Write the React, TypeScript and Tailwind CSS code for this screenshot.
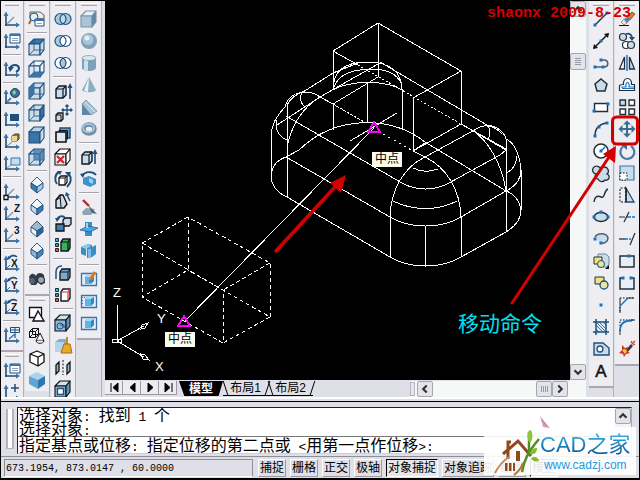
import type { ReactNode } from "react";

const NAVY = "#1f4f7d";
const BLUE = "#3b74a8";
const PALE = "#c9dcea";

type Tool = { name: string; icon: ReactNode } | "sep";

const Svg = ({ children }: { children: ReactNode }) => (
  <svg viewBox="0 0 20 20" className="h-5 w-5 shrink-0" fill="none" aria-hidden="true">
    {children}
  </svg>
);

/* ---------- UCS icons ---------- */

const Ucs = ({ children }: { children?: ReactNode }) => (
  <Svg>
    <path d="M4 5v12M3 16h13" stroke={NAVY} strokeWidth="1.6" />
    <path d="M4 2.5L1.5 7h5zM18 16l-4-2.5v5z" fill={BLUE} />
    {children}
  </Svg>
);

const AxisLetter = ({ letter }: { letter: string }) => (
  <Ucs>
    <path d="M5 15l3-3" stroke={BLUE} />
    <path d="M7 5c2-3 6-3 8-1" stroke={NAVY} strokeWidth="1.6" />
    <path d="M5 7l1-4 3 2z" fill={NAVY} />
    <text x="9" y="14" fontSize="10" fontWeight="bold" fontFamily="Liberation Sans, sans-serif" fill="#111827">
      {letter}
    </text>
  </Ucs>
);

const AxisNumber = ({ letter }: { letter: string }) => (
  <Ucs>
    <path d="M5 15l6-6" stroke="#8a97a5" strokeWidth="1.4" />
    <text x="12" y="9" fontSize="10" fontWeight="bold" fontFamily="Liberation Sans, sans-serif" fill="#111827">
      {letter}
    </text>
  </Ucs>
);

/* ---------- cubes ---------- */

const Cube = ({
  top = PALE,
  front = PALE,
  side = PALE,
  stroke = NAVY,
  wire = false,
  children,
}: {
  top?: string;
  front?: string;
  side?: string;
  stroke?: string;
  wire?: boolean;
  children?: ReactNode;
}) => (
  <Svg>
    <g stroke={stroke} strokeWidth="1.1" strokeLinejoin="round">
      <path d="M2 7l5-5h10l-4 5z" fill={top} />
      <path d="M2 7h11v11H2z" fill={front} />
      <path d="M13 7l4-5v11l-4 5z" fill={side} />
      {wire && <path d="M7 2v11M7 13h10M7 13l-5 5" strokeWidth=".8" />}
    </g>
    {children}
  </Svg>
);

const IsoCube = ({ left = PALE, right = PALE, top = "#f3f8fb" }: { left?: string; right?: string; top?: string }) => (
  <Svg>
    <g stroke={NAVY} strokeWidth=".9" strokeLinejoin="round">
      <path d="M10 2l6 6-6 4-6-4z" fill={top} />
      <path d="M4 8l6 4v6l-6-5z" fill={left} />
      <path d="M16 8l-6 4v6l6-5z" fill={right} />
    </g>
  </Svg>
);

const Rings = ({ a, b, mid }: { a: string; b: string; mid: string }) => (
  <Svg>
    <circle cx="7.5" cy="10" r="5.5" fill={a} />
    <circle cx="12.5" cy="10" r="5.5" fill={b} />
    <path d="M10 5a5.500 5.500 0 0 1 0 10a5.500 5.500 0 0 1 0-10z" fill={mid} />
    <circle cx="7.5" cy="10" r="5.5" stroke={NAVY} strokeWidth="1.2" />
    <circle cx="12.5" cy="10" r="5.5" stroke={NAVY} strokeWidth="1.2" />
  </Svg>
);

const FaceEdit = ({ fill = PALE, children }: { fill?: string; children?: ReactNode }) => (
  <Svg>
    <path d="M3 8l3-3h7v9l-3 3H3z" fill={fill} stroke="#0c1622" strokeWidth="1.4" strokeLinejoin="round" />
    <path d="M3 8h7v9M10 8l3-3" stroke="#0c1622" strokeWidth="1.2" />
    {children}
  </Svg>
);

const Swatches = ({ body, edge }: { body: string; edge: string }) => (
  <Svg>
    <g stroke="#111827" strokeWidth=".9">
      <path d="M2.500 3.500h3v3h-3z" fill="#2fb9e8" />
      <path d="M2.500 8.500h3v3h-3z" fill="#2fae55" />
      <path d="M2.500 13.500h3v3h-3z" fill="#e2544b" />
    </g>
    <path d="M8 7l2-3h7v9l-2 3H8z" fill={body} stroke="#111827" strokeWidth="1.4" />
    <path d="M8 7h7v9M15 7l2-3" stroke={edge} strokeWidth="1.2" />
  </Svg>
);

const Frame = ({ children }: { children?: ReactNode }) => (
  <Svg>
    <path d="M2.500 4.500h15v12h-15z" fill="#e4eef6" stroke={BLUE} strokeWidth="1.3" />
    <path d="M6 8l2-2h7v6l-3 3H6z" fill="#2f86c4" />
    <path d="M6 8h6v7H6z" fill="#5fb4e8" />
    <path d="M6 8l2-2h7l-3 2z" fill="#a9dcf7" />
    {children}
  </Svg>
);

const ucsTools: Tool[] = [
  { name: "UCS", icon: <Ucs><path d="M5 15l7-7" stroke="#8a97a5" strokeWidth="1.5" /></Ucs> },
  { name: "Named UCS", icon: <Ucs><path d="M8 3h10v9H8z" fill="#fff" stroke={NAVY} /><path d="M8 3h10v2H8z" fill={BLUE} /><path d="M10 7.500h6M10 9.500h6" stroke="#90a4b8" /></Ucs> },
  "sep",
  { name: "UCS previous", icon: <Ucs><path d="M8 9c2-4 8-4 9 0c0 2-1 3-3 4" stroke={NAVY} strokeWidth="2" /><path d="M6 8l6 0-4 5z" fill={NAVY} /></Ucs> },
  "sep",
  { name: "World UCS", icon: <Ucs><circle cx="13" cy="6" r="4.500" fill="#3f6f96" stroke="#26425c" /><path d="M10 5l3-2 1 3-2 2z" fill="#7ed5b2" /><path d="M5 15l4-4" stroke="#5f7f9b" strokeWidth="2" /></Ucs> },
  { name: "Object UCS", icon: <Ucs><path d="M8 5h9v7H8z" fill={NAVY} /></Ucs> },
  { name: "Face UCS", icon: <Ucs><path d="M10 5l3-2h4v5l-2 2h-5z" fill="#8f7a2d" stroke="#4d4420" /><path d="M10 5h5v5h-5z" fill="#e8d895" /><path d="M5 15l5-4" stroke="#5f7f9b" /></Ucs> },
  { name: "View UCS", icon: <Ucs><path d="M9 5h9v7H9z" fill={PALE} stroke={BLUE} /><path d="M5 15l4-3" stroke="#8a97a5" /></Ucs> },
  "sep",
  { name: "Origin UCS", icon: <Ucs><path d="M5 15l7-7" stroke="#8a97a5" strokeWidth="1.5" /><path d="M2 14.500h4v4H2z" fill="#fff" stroke="#111" strokeWidth="1.3" /></Ucs> },
  { name: "Z axis vector", icon: <AxisNumber letter="Z" /> },
  { name: "3 point UCS", icon: <AxisNumber letter="3" /> },
  "sep",
  { name: "Rotate X", icon: <AxisLetter letter="X" /> },
  { name: "Rotate Y", icon: <AxisLetter letter="Y" /> },
  { name: "Rotate Z", icon: <AxisLetter letter="Z" /> },
  "sep",
  { name: "Apply UCS", icon: <Ucs><path d="M8.500 2.500h9v5h-9zM13 3v4M8.500 5h9" fill="#eef4f9" stroke={NAVY} /><path d="M7 14l6-5v4" stroke={BLUE} strokeWidth="1.5" /></Ucs> },
];

const ucsTools2: Tool[] = [
  { name: "Display UCS dialog", icon: <Ucs><path d="M8 4h10v9H8z" fill="#fff" stroke={NAVY} /><path d="M8 4h10v2H8z" fill={BLUE} /><path d="M10 8.500h6M10 10.500h6" stroke="#90a4b8" /></Ucs> },
  { name: "Move UCS", icon: <Ucs><path d="M13 2v8M9 6h8" stroke={NAVY} strokeWidth="1.500" /></Ucs> },
];

const viewTools: Tool[] = [
  { name: "Named views", icon: <Svg><path d="M3 3h10l4 3v4H3z" fill="#f5efd8" stroke="#50616f" /><circle cx="7" cy="8" r="4" fill="#dff0fb" stroke={NAVY} /><path d="M4 11l-2 4" stroke="#a06a24" strokeWidth="2" /><path d="M8 10h9v7H8z" fill="#fff" stroke={NAVY} /><path d="M8 10h9v2H8z" fill={BLUE} /><path d="M10 14.500h5" stroke="#90a4b8" /></Svg> },
  "sep",
  { name: "Top view", icon: <Cube top={BLUE} wire /> },
  { name: "Bottom view", icon: <Cube top="#f1f6fa" front="#dfeaf3" side="#eef4f9" wire><path d="M2 18l5-5h10l-4 5z" fill={BLUE} /></Cube> },
  { name: "Left view", icon: <Cube wire><path d="M2 7l5-5v11l-5 5z" fill={BLUE} /></Cube> },
  { name: "Right view", icon: <Cube side={BLUE} wire /> },
  { name: "Front view", icon: <Cube front={BLUE} top="#b9d3e6" /> },
  { name: "Back view", icon: <Cube wire><path d="M7 2h10v11H7z" fill={BLUE} opacity=".75" /></Cube> },
  "sep",
  { name: "SW isometric", icon: <IsoCube left="#3b7db1" right="#a9c9e0" /> },
  { name: "SE isometric", icon: <IsoCube right="#3b7db1" /> },
  { name: "NE isometric", icon: <IsoCube top="#9fb9cd" right="#2f678f" left="#eef4f8" /> },
  { name: "NW isometric", icon: <IsoCube top="#eef4f8" left="#8fb5d1" right="#4f83ab" /> },
  "sep",
  { name: "Camera", icon: <Svg><path d="M2 8c2-4 5-4 7-1l1-2c3-2 5-1 7 1l1 8-4 2-3-3-2 3H4z" fill="#2f3c47" /><circle cx="5" cy="12" r="3" fill="#57646f" /><circle cx="14" cy="11" r="3.500" fill="#9aa8b3" stroke="#1d2730" /></Svg> },
];

const shadeTools: Tool[] = [
  { name: "2D wireframe", icon: <Svg><path d="M2.500 3.500h12v10h-12z" fill="#fff" stroke="#111" strokeWidth="1.3" /><path d="M11 7l6 10H6z" fill="#fff" stroke="#111" strokeWidth="1.4" /></Svg> },
  { name: "3D wireframe", icon: <Svg><path d="M2.500 5.500h6v6h-6zM5.500 2.500h6v6h-6zM2.500 5.500l3-3M8.500 5.500l3-3M2.500 11.500l3-3M8.500 11.500l3-3" stroke="#111" /><path d="M13 7l4 8c-1 3-7 3-8 0z" fill="#fff" stroke="#111" /><path d="M9 15c2-1 6-1 8 0" stroke="#111" strokeWidth=".7" /></Svg> },
  { name: "Hidden", icon: <Svg><path d="M10 3l7 3v8l-6 4-8-4V6z" fill="#fff" stroke="#111" strokeWidth="1.300" strokeLinejoin="round" /><path d="M3 6l8 3 6-3M11 9v9" stroke="#111" strokeWidth="1.300" /></Svg> },
  { name: "Flat shaded", icon: <Svg><path d="M10 2l8 4-7 4-9-4z" fill="#a7d4ef" /><path d="M2 6l9 4v9l-9-5z" fill="#5fa6d5" /><path d="M18 6l-7 4v9l7-5z" fill="#2f77ad" /></Svg> },
];

const solidEditTools: Tool[] = [
  { name: "Union", icon: <Rings a="#a9c8de" b="#a9c8de" mid="#c3d9e8" /> },
  { name: "Subtract", icon: <Rings a="#a9c8de" b="#fff" mid="#fff" /> },
  { name: "Intersect", icon: <Rings a="#fff" b="#fff" mid="#a9c8de" /> },
  "sep",
  { name: "Extrude faces", icon: <FaceEdit><path d="M17 6v12" stroke={NAVY} strokeWidth="1.6" /><path d="M17 2l-2.500 5h5z" fill={NAVY} /></FaceEdit> },
  { name: "Move faces", icon: <Svg><path d="M3 12l2-2h5v6l-2 2H3z" fill={PALE} stroke="#111" strokeWidth="1.300" /><path d="M3 12h5v6" stroke="#111" /><path d="M14 2v10M9 7h10M12.500 3.500L14 2l1.500 1.500M12.500 10.500L14 12l1.500-1.500M10.500 5.500L9 7l1.500 1.500M17.500 5.500L19 7l-1.500 1.500" stroke={NAVY} strokeWidth="1.300" /></Svg> },
  { name: "Offset faces", icon: <Svg><path d="M7 3h10v10H7z" fill="#6da0c9" stroke={NAVY} strokeWidth="1.500" /><path d="M3 7h10v10H3z" fill="#dfe9f1" stroke="#111" strokeWidth="1.600" /><path d="M5.500 5.500h9v9" stroke="#111" /></Svg> },
  { name: "Delete faces", icon: <Cube stroke="#111" top="#fff" front="#edf3f7" side="#fff"><path d="M4 9l7 7M11 9l-7 7" stroke="#cf2431" strokeWidth="2.200" /></Cube> },
  { name: "Rotate faces", icon: <Svg><path d="M6 9l2-2h6v6l-2 3H6z" fill="#fff" stroke="#111" strokeWidth="1.300" /><path d="M6 9h6v7M12 9l2-2" stroke="#111" /><path d="M4 15C1 11 2 5 6 3M16 5c3 4 2 9-2 13" stroke={NAVY} strokeWidth="2" /><path d="M4 2h5l-2 4zM12 3l6 0-2 5z" fill={NAVY} /></Svg> },
  { name: "Taper faces", icon: <Svg><path d="M3 16V9l4-5h3l4 9-3 4H3z" fill={PALE} stroke="#111" strokeWidth="1.400" strokeLinejoin="round" /><path d="M7 4l1 12M3 9l4-2" stroke="#111" /><path d="M14 4l3 6" stroke={NAVY} strokeWidth="1.600" /><path d="M12 5l1-4 4 3z" fill={NAVY} /></Svg> },
  { name: "Copy faces", icon: <Svg><path d="M10 7l2-2h6v6l-2 2h-6z" fill={PALE} stroke="#111" strokeWidth="1.300" /><path d="M3 11h8v7H3z" fill="#3f80b7" stroke="#111" strokeWidth="1.300" /><path d="M4 7c1-4 6-5 8-2" stroke={NAVY} strokeWidth="2" /><path d="M2 5l5 0-3 4z" fill={NAVY} /></Svg> },
  { name: "Color faces", icon: <Swatches body="#37b15a" edge="#111" /> },
  "sep",
  { name: "Copy edges", icon: <Svg><path d="M3 16V9c0-4 2-6 6-6" stroke={NAVY} strokeWidth="1.500" /><path d="M7 9l2-3h8v8l-2 3H7z" fill="#79a9cf" stroke="#111" strokeWidth="1.300" /><path d="M7 9h8v8M15 9l2-3" stroke="#111" /></Svg> },
  { name: "Color edges", icon: <Swatches body="#fff" edge="#d92c2c" /> },
  "sep",
  { name: "Imprint", icon: <Cube stroke="#111" front="#8fb9da" top="#cfe1ee" side="#5e94c0"><circle cx="7" cy="13" r="3" stroke={NAVY} /><path d="M7 12h4v3" stroke={NAVY} /></Cube> },
  { name: "Clean", icon: <Svg><path d="M2 7l4-3h9v9l-4 4H2z" fill="#7fb0d6" /><path d="M2 7h9v10H2z" fill="#b9d4e8" /><path d="M14 2v7" stroke="#c98d1d" strokeWidth="2" /><path d="M11 9h6l2 9H8z" fill="#e9a92a" stroke="#a86d10" /></Svg> },
  { name: "Separate", icon: <Svg><path d="M3 8l3-3v9l-3 3zM14 8l3-3v9l-3 3z" fill="#8fb9da" stroke="#111" strokeWidth="1.300" /><path d="M10 3v15" stroke="#111" strokeDasharray="2 1.500" /></Svg> },
  { name: "Shell", icon: <Cube stroke="#111" front="#8fb9da" top="#cfe1ee" side="#5e94c0"><path d="M4.500 9.500h6v6h-6z" fill="#fff" stroke={NAVY} strokeWidth="1.400" /></Cube> },
];

const solidTools: Tool[] = [
  { name: "Box", icon: <Cube stroke="#7d93a6" top="#e8f1f8" front="#a9c4d9" side="#5d86a8" /> },
  { name: "Sphere", icon: <Svg><circle cx="10" cy="10" r="8" fill="#7fa0bc" /><circle cx="9" cy="8.500" r="5.500" fill="#a9c3d8" /><circle cx="8" cy="7" r="2.500" fill="#e3eef6" /></Svg> },
  { name: "Cylinder", icon: <Svg><path d="M3 5v10c1 4 13 4 14 0V5z" fill="#7fa0bc" /><path d="M5 6v11l4 1V6z" fill="#cfe0ec" /><ellipse cx="10" cy="5" rx="7" ry="2.500" fill="#d9e7f1" stroke="#7d93a6" strokeWidth=".7" /></Svg> },
  { name: "Cone", icon: <Svg><path d="M10 2l7 13c-1 3-13 3-14 0z" fill="#8eacc4" /><path d="M10 2L5 16l4 1z" fill="#eaf3f9" /></Svg> },
  { name: "Wedge", icon: <Svg><path d="M3 7l4-4 11 11-6 4z" fill="#a9c4d9" stroke="#6b8397" strokeWidth=".7" /><path d="M3 7v11h9z" fill="#5d86a8" /><path d="M6 5l10 10" stroke="#dbe8f2" /></Svg> },
  { name: "Torus", icon: <Svg><ellipse cx="10" cy="10" rx="5.500" ry="4.500" stroke="#6f90ad" strokeWidth="4.500" /><ellipse cx="9.500" cy="9" rx="5.500" ry="4" stroke="#b9cfe0" strokeWidth="1.500" /></Svg> },
  "sep",
  { name: "Extrude", icon: <FaceEdit><path d="M16 6v11" stroke={NAVY} strokeWidth="1.600" /><path d="M16 2l-2.500 5h5z" fill={NAVY} /></FaceEdit> },
  { name: "Revolve", icon: <Svg><path d="M4 9l6-2 7 3v5l-6 3-7-3z" fill="#3c93cf" /><path d="M10 9l4 2v4l-4-2z" fill="#a9d3ee" /><path d="M3 7c3-5 11-5 14-1" stroke={NAVY} strokeWidth="1.800" /><path d="M1 5l5-1-2 5z" fill={NAVY} /></Svg> },
  "sep",
  { name: "Slice", icon: <Svg><path d="M3 15l4-4 9 1-4 6H4z" fill="#8fa6b7" /><path d="M4 3l6 6" stroke="#b02a2e" strokeWidth="2.400" /><path d="M9 8l9 9-5-1z" fill="#51616e" /></Svg> },
  { name: "Section", icon: <Svg><path d="M6 3h7v14H6z" fill="#3c8cc6" /><path d="M1 11l8-4 10 2-8 4z" fill="#49a8e4" stroke={NAVY} strokeWidth=".7" /><path d="M7 4h2v5H7z" fill="#a9d3ee" /></Svg> },
  { name: "Interfere", icon: <Svg><path d="M2 6l5-2v11l-5-2zM8 3l5 1v12l-5 1zM13 6l4-2v9l-4 3z" fill="#3c8cc6" /><path d="M2 6l6-3 4 2-5 3z" fill="#8cc9ee" /><path d="M9 8h3v9H9z" fill="#79bce8" /></Svg> },
  "sep",
  { name: "Setup drawing", icon: <Frame><path d="M16 3l-5 8" stroke="#d57b22" strokeWidth="3" /><path d="M11 11l-1 3 2-2z" fill="#333" /></Frame> },
  { name: "Setup view", icon: <Frame><path d="M3 6.500h3M3 9.500h2M3 12.500h2" stroke={BLUE} strokeDasharray="1 1" /></Frame> },
  { name: "Setup profile", icon: <Frame /> },
];

const node = (x: number, y: number) => <path d={`M${x - 1.5} ${y - 1.5}h3v3h-3z`} fill="#1673c4" />;

const drawTools: Tool[] = [
  { name: "Line", icon: <Svg><path d="M4 16L16 4" stroke="#263442" strokeWidth="1.400" />{node(4, 16)}{node(16, 4)}</Svg> },
  { name: "Construction line", icon: <Svg><path d="M3 17L17 3" stroke="#111" strokeWidth="1.400" /><path d="M2 18l1-5 4 4zM18 2l-1 5-4-4z" fill="#111" />{node(10, 10)}</Svg> },
  { name: "Polyline", icon: <Svg><path d="M4 14h9c5 0 5-7 0-7h-3" stroke="#50606e" strokeWidth="1.600" />{node(4, 14)}{node(12, 14)}{node(10, 7)}</Svg> },
  { name: "Polygon", icon: <Svg><path d="M10 4l6 5-2 7H6L4 9z" fill={PALE} stroke="#22303c" strokeWidth="1.500" /></Svg> },
  { name: "Rectangle", icon: <Svg><path d="M3.500 6.500h13v8h-13z" fill="#fff" stroke="#22303c" strokeWidth="1.400" />{node(3, 14)}{node(17, 7)}</Svg> },
  { name: "Arc", icon: <Svg><path d="M4 17C4 10 8 5 16 4" stroke="#22303c" strokeWidth="1.400" />{node(4, 17)}{node(8, 8)}{node(16, 4)}</Svg> },
  { name: "Circle", icon: <Svg><circle cx="10" cy="10" r="7" fill="#fff" stroke="#22303c" strokeWidth="1.600" /><path d="M10 10l4-4" stroke="#1673c4" strokeWidth="1.400" />{node(10, 10)}</Svg> },
  { name: "Revision cloud", icon: <Svg><path d="M9 5a4 4 0 1 0-4 6a3 3 0 0 0 2 5a4 4 0 0 0 7 1a3 3 0 0 0 2-6a4 4 0 0 0-3-7a4 4 0 0 0-4 1z" fill={PALE} stroke="#22303c" strokeWidth="1.300" /></Svg> },
  { name: "Spline", icon: <Svg><path d="M3 17c1-7 5-6 7-5c4 2 3-7 7-8" stroke="#22303c" strokeWidth="1.400" /></Svg> },
  { name: "Ellipse", icon: <Svg><ellipse cx="10" cy="10" rx="7" ry="4.500" fill={PALE} stroke="#22303c" strokeWidth="1.500" />{node(3, 10)}{node(10, 5)}{node(17, 10)}</Svg> },
  { name: "Ellipse arc", icon: <Svg><path d="M4 8c3-5 12-4 13 1c0 4-4 6-8 5" fill={PALE} stroke="#50606e" strokeWidth="1.500" />{node(4, 10)}{node(10, 14)}</Svg> },
  { name: "Insert block", icon: <Svg><path d="M7 3h8l3 3v8l-3 2H7z" fill={PALE} stroke="#6c88a0" /><path d="M3 6h8v7H3z" fill="#f2e27c" stroke="#22303c" /><circle cx="10" cy="13" r="3.500" fill="#e9e6a2" stroke={NAVY} /><path d="M18 18h-4l4-4z" fill="#111" /></Svg> },
  { name: "Make block", icon: <Svg><path d="M4 4h9v7H4z" fill="#f2e27c" stroke="#22303c" /><circle cx="13" cy="12" r="4" fill="#e9e6a2" stroke={NAVY} strokeWidth="1.300" /></Svg> },
  { name: "Point", icon: <Svg>{node(10, 10)}</Svg> },
  { name: "Hatch", icon: <Svg><path d="M5 5h10v10H5z" fill="#dfeaf3" /><path d="M5 8l7 7M5 5l10 10M8 5l7 7M5 12l3 3M12 5l3 3" stroke={BLUE} /><path d="M5 2v16M15 2v16M2 5h16M2 15h16" stroke={NAVY} strokeWidth="1.500" /></Svg> },
  { name: "Region", icon: <Svg><path d="M3 4h9l6 5v7H3z" fill={PALE} stroke={NAVY} strokeWidth="1.400" /><circle cx="9" cy="10" r="3" fill="#fff" stroke={NAVY} strokeWidth="1.300" /></Svg> },
  { name: "Multiline text", icon: <Svg><text x="10" y="16" textAnchor="middle" fontSize="17" fontFamily="Liberation Sans, sans-serif" fill="#111" stroke="#111" strokeWidth=".5">A</text></Svg> },
];

const modifyTools: Tool[] = [
  { name: "Erase", icon: <Svg><path d="M10 8l5-5 3 2-5 6z" fill="#d87a33" stroke="#5b3d22" strokeWidth=".7" /><path d="M7 10l3-2 3 3-3 3z" fill="#4c86c0" /><path d="M7 10l3 4-3 2-3-3z" fill="#f6dada" stroke="#7a5555" strokeWidth=".6" /><path d="M2 16.500h10" stroke="#111" /></Svg> },
  { name: "Copy", icon: <Svg><circle cx="6" cy="6" r="3.500" fill={PALE} stroke="#22303c" strokeWidth="1.200" /><circle cx="9" cy="14" r="3.500" fill="#fff" stroke="#22303c" strokeWidth="1.200" /><circle cx="14" cy="14" r="3.500" fill={PALE} stroke="#22303c" strokeWidth="1.200" /><path d="M9 3c3-1 5 0 6 3" stroke={NAVY} strokeWidth="1.800" /><path d="M12 6h6l-3 4z" fill={NAVY} /></Svg> },
  { name: "Mirror", icon: <Svg><path d="M7.500 4v12H2.500z" fill="#fff" stroke="#22303c" strokeWidth="1.300" /><path d="M12.500 4v12h5z" fill={PALE} stroke="#22303c" strokeWidth="1.300" /><path d="M10 2v16" stroke="#1673c4" strokeWidth="1.500" /></Svg> },
  { name: "Offset", icon: <Svg><path d="M2.500 15.500v-5c0-1 2-1 4-1c-1-8 9-8 8 0h3v6z" fill="#fff" stroke="#22303c" strokeWidth="1.200" /><path d="M5 13v-1h4c-1-6 4-6 3 0h5M5 13.500h12" stroke="#1673c4" strokeWidth="1.200" /></Svg> },
  { name: "Array", icon: <Svg><g stroke="#22303c" strokeWidth="1.400" fill="#fff"><path d="M3 3h5.500v5.500H3z" fill={PALE} /><path d="M12 3h5.500v5.500H12zM3 12h5.500v5.500H3zM12 12h5.500v5.500H12z" /></g></Svg> },
  { name: "Move", icon: <Svg><path d="M10 4v12M4 10h12" stroke="#3d6c93" strokeWidth="2" /><path d="M10 1.500l4 4H6zM10 18.500l4-4H6zM1.500 10l4-4v8zM18.500 10l-4-4v8z" fill="#3d6c93" /></Svg> },
  { name: "Rotate", icon: <Svg><path d="M14 5A7 7 0 1 1 6 5.500" stroke="#4a7ba5" strokeWidth="2.200" /><path d="M3 3h7v6z" fill="#3d6c93" /></Svg> },
  { name: "Scale", icon: <Svg><path d="M3 3h14v14H3z" fill={PALE} stroke={BLUE} strokeWidth="1.200" /><path d="M3 10h7v7H3z" fill="#fff" stroke="#111" strokeDasharray="1.500 1.500" /></Svg> },
  { name: "Stretch", icon: <Svg><path d="M9 3l8 14H9z" fill={PALE} stroke={NAVY} strokeWidth="1.300" /><path d="M9 3H3v14h6z" stroke="#111" strokeDasharray="2 1.500" /><path d="M9 3v14" stroke="#111" /></Svg> },
  { name: "Trim", icon: <Svg><path d="M2 10h6M9 10h2" stroke="#22303c" strokeWidth="1.200" /><path d="M11 10h7" stroke="#1673c4" strokeWidth="1.400" strokeDasharray="3 1" /><path d="M7 15l5-10" stroke="#22303c" strokeWidth="1.200" /></Svg> },
  { name: "Extend", icon: <Svg><path d="M2 10h6" stroke="#22303c" strokeWidth="1.300" /><path d="M8 10h6" stroke="#1673c4" strokeWidth="1.400" strokeDasharray="3 1" /><path d="M13 16l5-12" stroke="#22303c" strokeWidth="1.200" /></Svg> },
  { name: "Break at point", icon: <Svg><path d="M3 5h14v11H3z" fill="#e8eef3" stroke="#22303c" strokeWidth="1.500" />{node(12, 5)}</Svg> },
  { name: "Break", icon: <Svg><path d="M6 5H3v11h14V5h-3" fill="#e8eef3" stroke="#22303c" strokeWidth="1.500" />{node(6, 5)}{node(14, 5)}</Svg> },
  { name: "Chamfer", icon: <Svg><path d="M3 9V3h14M3 3v15" stroke="#111" strokeDasharray="1.500 1.500" /><path d="M3 11l8-8" stroke="#1673c4" strokeWidth="1.500" /><path d="M3 11v7M11 3h6" stroke="#22303c" /></Svg> },
  { name: "Fillet", icon: <Svg><path d="M3 9V3h14" stroke="#111" strokeDasharray="1.500 1.500" /><path d="M3 14C3 7 7 3.500 15 3.500" stroke="#1673c4" strokeWidth="1.800" /><path d="M3 13v5M14 3h4" stroke="#22303c" /></Svg> },
  { name: "Explode", icon: <Svg><path d="M8 12l6-7 2 2-6 7z" fill="#4b3430" /><path d="M5 6l3 3 3-1-1 4 3 2-4 1-2 3-1-3-4-1 3-3z" fill="#d6312b" /><path d="M5 11l3-1 2 2-2 3z" fill="#f4d339" /><path d="M14 4l1-2M16 6l2-1M15 5l3-3" stroke="#d6312b" strokeWidth="1.200" /></Svg> },
];

/* ---------- toolbars ---------- */

const Grip = () => (
  <div className="flex h-[7px] shrink-0 flex-col justify-center gap-px px-1">
    <div className="h-[3px] border-t border-b border-t-white border-b-[#b0a6b4] bg-[#dcd8e0]" />
  </div>
);

const Toolbar = ({ tools, label, last = false }: { tools: Tool[]; label: string; last?: boolean }) => (
  <div
    role="toolbar"
    aria-label={label}
    className={`flex w-full shrink-0 flex-col bg-[#ededf2] ${last ? "border-b-2 border-[#aaa5b0] pb-1" : ""}`}
  >
    <Grip />
    {tools.map((tool, i) =>
      tool === "sep" ? (
        <div key={i} className="mx-0.5 flex h-1.5 shrink-0 items-center">
          <div className="h-0.5 w-full border-t border-b border-t-[#a5a1ad] border-b-white" />
        </div>
      ) : (
        <button key={i} type="button" aria-label={tool.name} className="flex h-[22px] shrink-0 items-center justify-center">
          {tool.icon}
        </button>
      ),
    )}
  </div>
);

const Dock = ({ children, first = false }: { children: ReactNode; first?: boolean }) => (
  <div className={`flex shrink-0 flex-col shadow-[1px_0_0_#b3aeb9] ${first ? "w-[22px]" : "w-6"}`}>{children}</div>
);

/* ---------- scroll bars ---------- */

const ScrollButton = ({ dir, label }: { dir: "up" | "down" | "left" | "right"; label: string }) => {
  const paths = { up: "M4 10l4-4 4 4", down: "M4 6l4 4 4-4", left: "M10 4L6 8l4 4", right: "M6 4l4 4-4 4" };
  return (
    <button
      type="button"
      aria-label={label}
      className="flex h-4 w-4 shrink-0 items-center justify-center rounded-xs border border-[#a6a6b0] bg-[#e3e3ea]"
    >
      <svg viewBox="0 0 16 16" className="h-3.5 w-3.5" fill="none" aria-hidden="true">
        <path d={paths[dir]} stroke="#333" strokeWidth="2.500" />
      </svg>
    </button>
  );
};

/* ---------- model space ---------- */

const Drawing = () => (
  <svg
    width="464"
    height="378"
    viewBox="105 1 464 378"
    fill="none"
    stroke="#fff"
    shapeRendering="crispEdges"
    className="absolute top-0 left-0"
    role="img"
    aria-label="Wireframe model"
  >
    {/* upper box */}
    <path d="M333 51L378 23L461 71L413 98V151L461 124V71M333 51V90M333 103V130M378 23V77L333 104M333 51L358 65" />
    <path d="M358 65L461 124" strokeDasharray="2 2" />
    <path d="M333 104L366 123" strokeDasharray="3 1" />
    <path d="M378 131L413 151" strokeDasharray="2 4" />
    {/* rounded end of the upper box */}
    <path d="M333 90C333 71 345 62 367 62C390 62 402 72 402 90M333 90C337 76 347 70 370 69C388 69 397 74 401 83M333 90C350 80 386 80 402 90" />
    <path d="M367 83V123M402 89V130" />
    {/* slab, back edges */}
    <path d="M303 92L333 73L358 63M320 97L378 64M380 62L487 125M461 124L506 150M320 97L333 104M413 151L425 157M425 157L480 127C487 124 496 127 502 134" />
    <path d="M286 157L299 150C335 115 390 115 425 142L506 191M425 143L413 151" />
    {/* left corner */}
    <path d="M271 178V135C272 122 279 113 285 107C288 96 297 92 306 92C313 92 317 95 320 97C301 108 289 130 287 150M287 197V105C290 99 295 95 302 92C299 98 301 103 304 106" />
    <path d="M320 97L277 125M286 116L402 183M277 120C274 129 280 139 289 140M271 178C271 167 277 160 286 157" />
    {/* slab, front edges */}
    <path d="M286 157L390 217C410 229 441 229 461 217L506 191C516 186 521 180 521 170" />
    <path d="M271 177C272 187 278 193 287 197L390 257C410 269 441 269 461 257L506 232C516 226 521 219 521 210V170" />
    <path d="M402 183C416 191 435 191 449 183L500 155L506 150" />
    <path d="M390 257V217C391 189 404 167 425 157C446 167 460 189 461 217V257M425 226V266" />
    <path d="M413 168C421 172 430 172 438 169M393 201C413 211 438 211 457 201" />
    {/* right corner */}
    <path d="M506 232V139C504 131 496 126 487 125C491 129 491 136 487 140M472 130C488 140 502 164 506 191M506 139C515 143 520 156 521 170M506 191C515 194 520 202 521 210M506 173C512 171 516 165 517 156M461 124L506 149" />
    {/* rubber band */}
    <path d="M184 322L374 128M350 141L397 113" />
    {/* selected box */}
    <path
      d="M188 217L142 243V297L188 270V217L270 263V317L188 270M142 243L223 290V343L142 297M270 263L223 290M270 317L223 343"
      strokeDasharray="4 3"
    />
    {/* UCS marker */}
    <path d="M117 341V305M117 341L144 326M117 341L144 357" />
    <ellipse cx="117" cy="341" rx="5" ry="2" />
    <path d="M142 325l6-2-3 5-4 1zM141 354l4 1 4 5-6-1z" />
    <g fontFamily="Liberation Sans, sans-serif" fontSize="13" fill="#fff" stroke="none">
      <text x="113" y="297">Z</text>
      <text x="157" y="323">Y</text>
      <text x="155" y="371">X</text>
    </g>
    <g stroke="#f0f" strokeWidth="2">
      <path d="M374 122L368 132H380z" />
      <path d="M184 316L178 326H190z" />
    </g>
    <g shapeRendering="auto" stroke="none" fill="#d40000">
      <path d="M276 251L335 187" stroke="#d40000" strokeWidth="3.500" strokeLinecap="round" />
      <path d="M346 175L330 183L341 193z" />
    </g>
  </svg>
);

const tip = "absolute bg-[#fbfbea] px-[3px] text-xs leading-[15px] text-black";

const ModelSpace = () => (
  <div className="relative min-h-0 flex-1 overflow-hidden bg-black">
    <Drawing />
    <span className={`${tip} top-[151px] left-[267px]`}>中点</span>
    <span className={`${tip} top-[331px] left-[60px]`}>中点</span>
    <span className="absolute top-[311px] left-[353px] text-[21px] leading-6 text-[#00e0f4]">移动命令</span>
  </div>
);

const navPaths = [
  { label: "First tab", d: "M5 3v9M12 3v9L7 7.500z" },
  { label: "Previous tab", d: "M11 3v9L6 7.500z" },
  { label: "Next tab", d: "M6 3v9l5-4.500z" },
  { label: "Last tab", d: "M12 3v9M5 3v9l5-4.500z" },
];

const slanted =
  "relative h-[15px] w-[45px] border-b border-black text-center text-xs leading-[14px] before:absolute before:inset-y-0 before:left-0.5 before:border-l before:border-black before:skew-x-[18deg] after:absolute after:inset-y-0 after:right-0 after:border-r after:border-black after:-skew-x-[18deg]";

const LayoutTabs = () => (
  <div className="flex h-[17px] shrink-0 items-start bg-[#dfdfe7] pt-px">
    {navPaths.map(({ label, d }) => (
      <button
        key={label}
        type="button"
        aria-label={label}
        className="flex h-3.5 w-[18px] shrink-0 items-center justify-center border-r border-b border-[#9a9aa4] bg-[#ececf1]"
      >
        <svg viewBox="0 0 16 15" className="h-[15px] w-4" fill="#000" stroke="#000" aria-hidden="true">
          <path d={d} />
        </svg>
      </button>
    ))}
    <div role="tablist" className="ml-0.5 flex">
      <button
        role="tab"
        aria-selected="true"
        className="h-[15px] w-11 bg-black text-center text-xs leading-[14px] font-bold text-white [clip-path:polygon(0_0,100%_0,90%_100%,12%_100%)]"
      >
        模型
      </button>
      <button role="tab" aria-selected="false" className={slanted}>布局1</button>
      <button role="tab" aria-selected="false" className={slanted}>布局2</button>
    </div>
    <div className="ml-auto flex h-4 w-40 items-center bg-[#f6f7f7] pr-0.5">
      <div className="mr-0.5 h-3.5 w-[5px] border border-[#b5b5bd] bg-[#e6e6ec]" />
      <ScrollButton dir="left" label="Scroll left" />
      <div className="flex flex-1 justify-end">
        <div className="flex h-4 w-4 items-center justify-center gap-px rounded-xs border border-[#a6a6b0] bg-[#e3e3ea]">
          <i className="h-1.5 w-px bg-[#9a9aa4]" />
          <i className="h-1.5 w-px bg-[#9a9aa4]" />
          <i className="h-1.5 w-px bg-[#9a9aa4]" />
          <i className="h-1.5 w-px bg-[#9a9aa4]" />
        </div>
      </div>
      <ScrollButton dir="right" label="Scroll right" />
    </div>
  </div>
);

/* ---------- command line and status ---------- */

const Half = ({ children }: { children: string }) => (
  <span className="font-['Liberation_Mono',monospace] text-[13px]">{children}</span>
);

const CommandLine = () => (
  <section aria-label="Command line" className="flex h-[55px] shrink-0 border-b border-[#8e8e98] bg-[#dfdfe7] pt-[5px] pr-[7px] pb-0.5">
    <div className="mt-0.5 mr-[3px] ml-[5px] flex h-10 w-2 justify-center border-x-2 border-b border-[#b3b3bd] bg-white" />
    <div className="flex min-w-0 flex-1 border border-t-[#222] border-r-[#aaaab4] border-b-[#d0d0d8] border-l-[#222] bg-white">
      <div className="min-w-0 flex-1 text-base whitespace-pre text-black">
        <p className="h-3.5 pl-px leading-[15px]">选择对象<Half>: </Half>找到<Half> 1 </Half>个</p>
        <p className="h-3.5 pl-px leading-[15px]">选择对象<Half>:</Half></p>
        <p className="border-t border-[#777] pl-px leading-[18px]">
          指定基点或位移<Half>: </Half>指定位移的第二点或<Half>{" <"}</Half>用第一点作位移<Half>{">:"}</Half>
        </p>
      </div>
      <div className="w-4 shrink-0 bg-[#f4f4f6]">
        <ScrollButton dir="up" label="Scroll up" />
      </div>
    </div>
  </section>
);

const modes = [
  { label: "捕捉", on: false },
  { label: "栅格", on: false },
  { label: "正交", on: false },
  { label: "极轴", on: false },
  { label: "对象捕捉", on: true },
  { label: "对象追踪", on: false },
  { label: "线宽", on: false },
  { label: "模型", on: true },
];

const StatusBar = () => (
  <footer className="flex h-[21px] shrink-0 items-center gap-1 overflow-hidden bg-[#dfdfe7] pl-[3px]">
    <output className="mr-px h-[18px] w-[249px] shrink-0 border border-t-[#8e8e98] border-r-[#8e8e98] border-b-white border-l-[#8e8e98] pl-px font-['Liberation_Mono',monospace] text-[10px] leading-[17px] whitespace-pre text-black">
      {"673.1954, 873.0147 , 60.0000"}
    </output>
    {modes.map(({ label, on }) => (
      <button
        key={label}
        type="button"
        aria-pressed={on}
        className={`h-[18px] shrink-0 border px-px text-xs leading-4 text-black ${
          on ? "border-t-black border-r-white border-b-white border-l-black bg-[#e6e6ec]" : "border-t-white border-r-[#9a9aa4] border-b-[#9a9aa4] border-l-white"
        }`}
      >
        {label}
      </button>
    ))}
  </footer>
);

const Watermark = () => (
  <a href="#cadzj" className="absolute right-[3px] bottom-[3px] flex h-12 w-[152px] items-center bg-white/90 pl-2">
    <svg viewBox="490 425 48 48" className="h-12 w-12 shrink-0 overflow-visible" fill="none" aria-hidden="true">
      <path d="M506 457V440h3M501 452l15-13 13 15" stroke="#91491c" strokeWidth="3" />
      <path d="M493 471c4-8 8-12 14-16" stroke="#c98a55" strokeWidth="2" />
      <path d="M514 449h4v10h-4zM503 461h2.500v8H503zM507 461h2.500v8H507zM511 461h2v8h-2z" fill="#91491c" />
      <path d="M520 470c2-12 6-20 17-33M527 454V430" stroke="#4f8f25" strokeWidth="2.500" />
      <ellipse cx="528" cy="434" rx="2.500" ry="6" fill="#8fc63a" />
      <path d="M528 452c1-5 4-6 7-6c0 4-2 7-7 6zM529 456c4-2 7-1 8 3c-4 1-7 0-8-3z" fill="#7fbf2e" />
      <path d="M512 473c4-3 7-6 9-12" stroke="#b6722f" strokeWidth="2" />
      <path d="M538 414l10 12-7-1z" fill="#d9a0b4" />
      <path d="M540 418l5 7" stroke="#b98aa8" />
    </svg>
    <span className="flex flex-col items-center pt-1">
      <span className="bg-linear-to-b from-[#35b4ea] to-[#0c4f8f] bg-clip-text text-[22px] leading-6 whitespace-nowrap text-transparent">CAD之家</span>
      <span className="text-xs leading-4 text-[#1c9be0]">www.cadzj.com</span>
    </span>
  </a>
);

const Callout = () => (
  <div className="pointer-events-none absolute top-0 right-0 h-[310px] w-40">
    <svg viewBox="480 0 160 310" className="h-full w-full" fill="none" aria-hidden="true">
      <rect x="613.500" y="116" width="25" height="27" rx="4" stroke="#d40000" strokeWidth="3" />
      <path d="M513 302L610 156" stroke="#d40000" strokeWidth="3" strokeLinecap="round" />
      <path d="M617 145L604 153L616 162z" fill="#d40000" />
    </svg>
    <span className="absolute top-1 right-2 font-['Liberation_Mono',monospace] text-[15px] leading-[18px] font-bold whitespace-nowrap text-[#d40000]">
      shaonx 2009-8-23
    </span>
  </div>
);

const App = () => {
  return (
    <div className="relative flex h-screen flex-col overflow-hidden border-x border-t border-b-2 border-black bg-[#dfdfe7] font-['Liberation_Sans','Noto_Sans_CJK_SC',sans-serif]">
      <main className="flex min-h-0 flex-1 overflow-hidden">
        <div className="mr-[3px] flex shrink-0 gap-0.5 overflow-hidden pr-px">
          <Dock first>
            <Toolbar label="UCS" tools={ucsTools} last />
            <Toolbar label="UCS II" tools={ucsTools2} />
          </Dock>
          <Dock>
            <Toolbar label="View" tools={viewTools} last />
            <Toolbar label="Shade" tools={shadeTools} />
          </Dock>
          <Dock>
            <Toolbar label="Solids editing" tools={solidEditTools} />
          </Dock>
          <Dock>
            <Toolbar label="Solids" tools={solidTools} last />
          </Dock>
        </div>
        <div className="flex min-w-0 flex-1 flex-col">
          <ModelSpace />
          <LayoutTabs />
        </div>
        <div className="mr-[3px] flex w-4 shrink-0 flex-col bg-[#f6f7f7] pb-[17px]">
          <ScrollButton dir="up" label="Scroll up" />
          <div className="mt-9 flex h-[17px] flex-col items-center justify-center gap-px rounded-xs border border-[#a6a6b0] bg-[#e3e3ea]">
            <i className="h-px w-1.5 bg-[#9a9aa4]" />
            <i className="h-px w-1.5 bg-[#9a9aa4]" />
            <i className="h-px w-1.5 bg-[#9a9aa4]" />
            <i className="h-px w-1.5 bg-[#9a9aa4]" />
          </div>
          <div className="mt-auto flex">
            <ScrollButton dir="down" label="Scroll down" />
          </div>
        </div>
        <div className="flex shrink-0 gap-0.5">
          <Dock>
            <Toolbar label="Draw" tools={drawTools} last />
          </Dock>
          <Dock>
            <Toolbar label="Modify" tools={modifyTools} last />
          </Dock>
        </div>
      </main>
      <div className="h-[5px] shrink-0 border-t-2 border-b border-t-white border-b-black" />
      <CommandLine />
      <StatusBar />
      <Watermark />
      <Callout />
    </div>
  );
};

export default App;
